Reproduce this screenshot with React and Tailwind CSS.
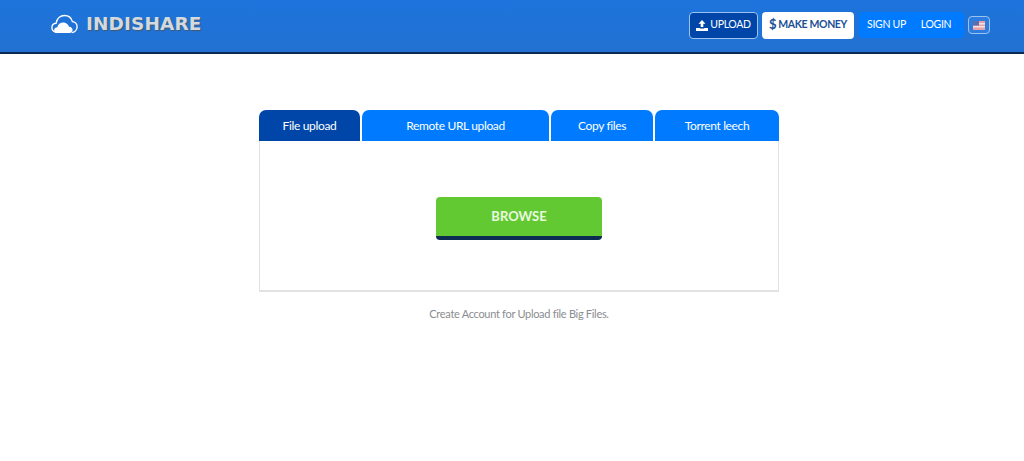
const font = { fontFamily: 'Lato, sans-serif' }

function Logo() {
  return (
    <div className="flex items-center gap-[8px] mb-[2px]">
      <svg width="27" height="20" viewBox="0 0 30 22" fill="none">
        <path d="M7 20.5C3.5 20.5 1 18 1 15.2c0-2.700 2-4.800 4.600-5C6.600 5 10.400 1.500 15 1.500c4.300 0 7.800 2.800 8.800 6.800 2.900.3 5.200 2.800 5.200 5.900 0 3.500-2.700 6.300-6 6.300" stroke="#fff" strokeWidth="1.500" />
        <path d="M7 21c-2 0-3.500-1.400-3.500-3.200 0-1.900 1.500-3.300 3.500-3.300.6-3 3.300-5.200 6.500-5.200 3.100 0 5.700 2 6.500 4.800 2-.2 4 1.500 4 3.600 0 1.900-1.500 3.300-3.400 3.300z" fill="#fff" />
      </svg>
      <span className="text-[18.500px] leading-none font-bold tracking-[0.1px] text-[#d3d9df] [text-shadow:1px_1px_1px_#44586e] font-['DejaVu_Sans']">INDISHARE</span>
    </div>
  )
}

function UploadIcon() {
  return (
    <svg width="12" height="11" viewBox="0 0 12 11" fill="#fff">
      <path d="M6 0l3.500 3.800H7.300V7H4.700V3.800H2.500z" />
      <path d="M0 8h3.800v.6h4.400V8H12v3H0z" />
    </svg>
  )
}

function Flag() {
  return (
    <svg width="12" height="9" viewBox="0 0 12 9">
      <rect width="12" height="9" fill="#e8a0a8" />
      <rect y="2" width="12" height="1.500" fill="#f3dfe0" />
      <rect y="5" width="12" height="1.500" fill="#f3dfe0" />
      <rect width="6" height="4.500" fill="#5a6fb0" />
    </svg>
  )
}

export default function App() {
  const tabs = [
    { label: 'File upload', width: 'w-[101px]', bg: 'bg-[#0046a8]' },
    { label: 'Remote URL upload', width: 'w-[187px]', bg: 'bg-[#007bff]' },
    { label: 'Copy files', width: 'w-[102px]', bg: 'bg-[#007bff]' },
    { label: 'Torrent leech', width: 'w-[124px]', bg: 'bg-[#007bff]' },
  ]

  return (
    <div className="min-h-[461px] bg-white" style={font}>
      <header className="h-[54px] border-b-2 border-[#0b2a52] bg-gradient-to-b from-[#1d74dc] to-[#2271d2] flex items-center justify-between pl-[51px] pr-[34px] pb-[2px]">
        <Logo />
        <div className="flex items-center">
          <button className="h-[27px] w-[69px] rounded-[4px] border border-[#9cc3f0] bg-[#0046a8] text-white text-[10.500px] tracking-[-0.3px] flex items-center justify-center gap-[2px]">
            <UploadIcon />
            UPLOAD
          </button>
          <button className="ml-[4px] h-[27px] w-[92px] rounded-[4px] bg-white text-[#1c4f95] text-[10.500px] tracking-[-0.35px] font-bold flex items-center justify-center gap-[2px]">
            <span className="text-[13px] font-bold">$</span>
            MAKE MONEY
          </button>
          <div className="ml-[5px] h-[26px] w-[105px] rounded-[4px] bg-[#007bff] text-white text-[10.500px] tracking-[-0.3px] flex items-center">
            <span className="w-[55px] text-center">SIGN UP</span>
            <span className="w-[44px] text-center">LOGIN</span>
          </div>
          <div className="ml-[4px] h-[18px] w-[22px] rounded-[4px] border border-[#9cc3f0] bg-[#2c7de0] flex items-center justify-center">
            <Flag />
          </div>
        </div>
      </header>

      <main className="flex flex-col items-center pt-[56px] pl-[14px]">
        <div className="w-[520px] flex gap-[2px]">
          {tabs.map((tab) => (
            <div key={tab.label} className={`${tab.width} ${tab.bg} h-[31px] rounded-t-[7px] text-white text-[12px] tracking-[-0.35px] flex items-center justify-center`}>
              {tab.label}
            </div>
          ))}
        </div>
        <div className="w-[520px] h-[151px] border-x border-b-2 border-[#e0e2e4] flex justify-center pt-[56px]">
          <button className="w-[166px] h-[43px] rounded-[4px] bg-[#63c932] border-b-[4px] border-[#0c2c52] text-[#eaf9e0] text-[13px] font-bold">
            BROWSE
          </button>
        </div>
        <p className="mt-[14px] text-[11px] tracking-[-0.3px] leading-[16px] text-[#8a8d90]">Create Account for Upload file Big Files.</p>
      </main>
    </div>
  )
}
